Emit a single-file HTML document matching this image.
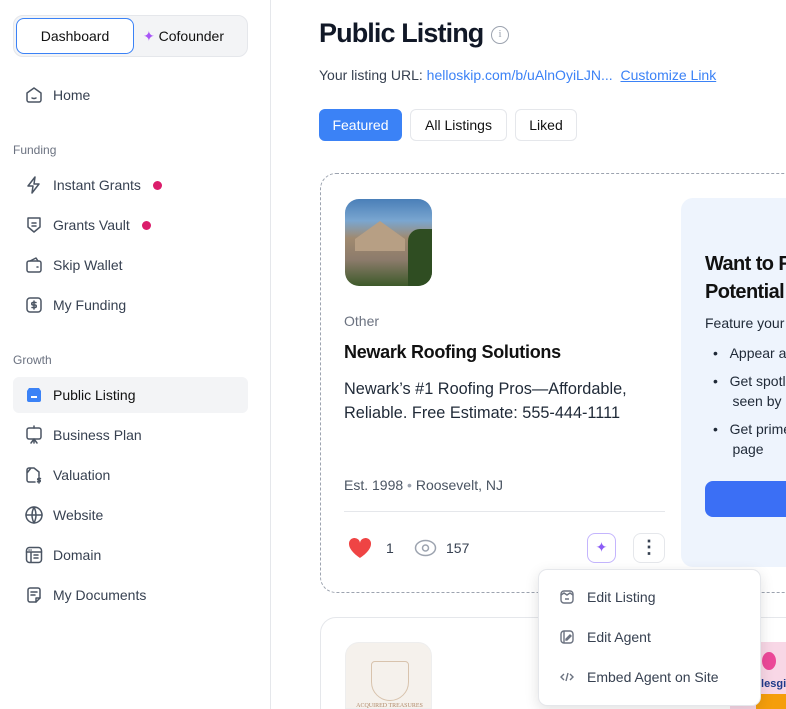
<!DOCTYPE html>
<html><head><meta charset="utf-8"><style>
*{box-sizing:border-box;margin:0;padding:0}
html,body{width:786px;height:709px;overflow:hidden}
body{background:#fff;font-family:"Liberation Sans",sans-serif;position:relative;color:#1f2937}
#w{position:absolute;left:0;top:0;width:786px;height:709px;overflow:hidden}
.side{position:absolute;left:0;top:0;width:271px;height:709px;border-right:1px solid #e5e7eb}
.seg{position:absolute;left:13px;top:15px;width:235px;height:42px;background:#f3f4f6;border:1px solid #e5e7eb;border-radius:10px}
.seg .a{position:absolute;left:2px;top:2px;width:118px;height:36px;background:#fff;border:1px solid #3b82f6;border-radius:8px;text-align:center;line-height:34px;font-size:14px;color:#111}
.seg .b{position:absolute;left:128px;top:0;line-height:40px;font-size:14px;color:#111}
.nav{position:absolute;left:24px;font-size:14px;color:#374151;display:flex;align-items:center;height:20px}
.nav svg{width:20px;height:20px;margin-right:9px;fill:none;stroke:#4b5563;stroke-width:1.5;stroke-linecap:round;stroke-linejoin:round}
.dot{width:9px;height:9px;border-radius:50%;background:#db1d6b;margin-left:12px}
.lbl{position:absolute;left:13px;font-size:12px;color:#6b7280}
.act{position:absolute;left:13px;top:377px;width:235px;height:36px;background:#f3f4f6;border-radius:6px}
h1{position:absolute;left:319px;top:18px;font-size:27px;font-weight:bold;color:#111827;letter-spacing:-0.9px}
.info{position:absolute;left:491px;top:26px;width:18px;height:18px;border:1.5px solid #9ca3af;border-radius:50%;font-size:11px;color:#9ca3af;text-align:center;line-height:15px;font-family:"Liberation Serif",serif}
.url{position:absolute;left:319px;top:67px;font-size:14px;color:#374151}
.url span{color:#3b82f6}.url u{color:#3b82f6;margin-left:4px}
.tab{position:absolute;top:109px;height:32px;border:1px solid #e5e7eb;border-radius:6px;font-size:14px;line-height:30px;text-align:center;color:#111}
.card{position:absolute;left:320px;top:173px;width:520px;height:420px;border:1px dashed #9ca3af;border-radius:16px}
.img{position:absolute;border-radius:14px;overflow:hidden}
.t{position:absolute;white-space:nowrap}
.panel{position:absolute;left:681px;top:198px;width:140px;height:369px;background:#eef4fd;border-radius:12px}
.btn{position:absolute;width:30px;height:30px;border:1px solid #e5e7eb;border-radius:8px;background:#fff}
.menu{position:absolute;left:538px;top:569px;width:223px;height:137px;background:#fff;border:1px solid #e5e7eb;border-radius:9px;box-shadow:0 4px 14px rgba(0,0,0,.12)}
.mi{position:absolute;left:20px;font-size:14px;color:#374151;display:flex;align-items:center}
.mi svg{width:16px;height:16px;margin-right:12px;fill:none;stroke:#6b7280;stroke-width:1.4}
</style></head><body><div id="w">
<div class="side">
<div class="seg"><div class="a">Dashboard</div><div class="b" style="left:129px"><span style="color:#a855f7">✦</span> Cofounder</div></div>
<div class="nav" style="top:85px"><svg viewBox="0 0 20 20"><path d="M3 8l7-5 7 5v7a2 2 0 0 1-2 2H5a2 2 0 0 1-2-2z"/><path d="M8 13q2 1 4 0"/></svg>Home</div>
<div class="lbl" style="top:143px">Funding</div>
<div class="nav" style="top:175px"><svg viewBox="0 0 20 20"><path d="M11 2L4 11h5l-1 7 7-9h-5z"/></svg>Instant Grants<span class="dot"></span></div>
<div class="nav" style="top:215px"><svg viewBox="0 0 20 20"><path d="M4 3h12v9l-6 5-6-5z"/><path d="M8 8h4M8 11h4"/></svg>Grants Vault<span class="dot"></span></div>
<div class="nav" style="top:255px"><svg viewBox="0 0 20 20"><rect x="3" y="6" width="14" height="11" rx="2"/><path d="M6 6l6-3 2 3M13 12h1"/></svg>Skip Wallet</div>
<div class="nav" style="top:295px"><svg viewBox="0 0 20 20"><rect x="3" y="3" width="14" height="14" rx="3"/><path d="M12 7.5h-3a1.2 1.2 0 0 0 0 2.5h2a1.2 1.2 0 0 1 0 2.5H8M10 6v8"/></svg>My Funding</div>
<div class="lbl" style="top:353px">Growth</div>
<div class="act"></div>
<div class="nav" style="top:385px;color:#111"><svg viewBox="0 0 20 20" style="stroke:none"><path d="M3 6l2-3h10l2 3v9a2 2 0 0 1-2 2H5a2 2 0 0 1-2-2z" fill="#3b82f6"/><rect x="7" y="11" width="6" height="2" fill="#fff"/></svg>Public Listing</div>
<div class="nav" style="top:425px"><svg viewBox="0 0 20 20"><rect x="3" y="3" width="14" height="11" rx="2"/><path d="M10 14v4M7 18l3-4 3 4M10 1v2"/></svg>Business Plan</div>
<div class="nav" style="top:465px"><svg viewBox="0 0 20 20"><path d="M11 17H5a2 2 0 0 1-2-2V5a2 2 0 0 1 2-2h5l5 4v4M3 8l4-5"/><path d="M15 12v6M16.5 13.5h-2a.8.8 0 0 0 0 1.6h1a.8.8 0 0 1 0 1.6h-2"/></svg>Valuation</div>
<div class="nav" style="top:505px"><svg viewBox="0 0 20 20"><circle cx="10" cy="10" r="8"/><path d="M2 10h16M10 2q-4 8 0 16q4-8 0-16"/></svg>Website</div>
<div class="nav" style="top:545px"><svg viewBox="0 0 20 20"><rect x="2.5" y="2.5" width="15" height="15" rx="3"/><path d="M2.5 7h15M7 7v10M10 10h4M10 13h4M5 5h.1M7 5h.1"/></svg>Domain</div>
<div class="nav" style="top:585px"><svg viewBox="0 0 20 20"><path d="M12 17H6a2 2 0 0 1-2-2V5a2 2 0 0 1 2-2h8a2 2 0 0 1 2 2v8z"/><path d="M7 7h6M7 10h4M12 17v-4h4"/></svg>My Documents</div>
</div>

<h1>Public Listing</h1><div class="info">i</div>
<div class="url">Your listing URL: <span>helloskip.com/b/uAlnOyiLJN...</span> <u>Customize Link</u></div>
<div class="tab" style="left:319px;width:83px;background:#3b82f6;border-color:#3b82f6;color:#fff">Featured</div>
<div class="tab" style="left:410px;width:97px">All Listings</div>
<div class="tab" style="left:515px;width:62px">Liked</div>

<div class="card"></div>
<div class="img" style="left:345px;top:199px;width:87px;height:87px;background:linear-gradient(180deg,#4a7fb8 0%,#7aa6d0 25%,#a08a70 45%,#8c7b6b 70%,#3d5a2a 100%)">
<div style="position:absolute;left:10px;top:22px;width:50px;height:30px;background:#b79f84;clip-path:polygon(50% 0,100% 60%,100% 100%,0 100%,0 60%)"></div>
<div style="position:absolute;right:0;top:30px;width:24px;height:57px;background:#2f4d22;border-radius:12px 0 0 0"></div></div>
<div class="t" style="left:344px;top:313px;font-size:14px;color:#6b7280">Other</div>
<div class="t" style="left:344px;top:342px;font-size:18px;font-weight:bold;color:#111;letter-spacing:-0.3px">Newark Roofing Solutions</div>
<div class="t" style="left:344px;top:377px;font-size:16.3px;color:#1f2937;line-height:24px">Newark’s #1 Roofing Pros—Affordable,<br>Reliable. Free Estimate: 555-444-1111</div>
<div class="t" style="left:344px;top:477px;font-size:14px;color:#4b5563">Est. 1998 <span style="color:#9ca3af">•</span> Roosevelt, NJ</div>
<div style="position:absolute;left:344px;top:511px;width:321px;height:1px;background:#e5e7eb"></div>
<svg style="position:absolute;left:348px;top:537px" width="24" height="22" viewBox="0 0 24 22"><path d="M12 21S1 14 1 7a5.5 5.5 0 0 1 11-1 5.5 5.5 0 0 1 11 1c0 7-11 14-11 14z" fill="#ef4444"/></svg>
<div class="t" style="left:386px;top:540px;font-size:14px;color:#374151">1</div>
<svg style="position:absolute;left:414px;top:539px" width="23" height="18" viewBox="0 0 23 18"><ellipse cx="11.5" cy="9" rx="10" ry="7.5" fill="none" stroke="#9ca3af" stroke-width="1.5"/><circle cx="11.5" cy="9" r="3" fill="none" stroke="#9ca3af" stroke-width="1.5"/></svg>
<div class="t" style="left:446px;top:540px;font-size:14px;color:#374151">157</div>
<div class="btn" style="left:587px;top:533px;width:29px;border-color:#c4b5fd;text-align:center;line-height:27px;color:#8b5cf6;font-size:14px">✦</div>
<div class="btn" style="left:633px;top:533px;width:32px;text-align:center;line-height:26px;font-size:18px;color:#374151;font-weight:bold">⋮</div>

<div class="panel"></div>
<div class="t" style="left:705px;top:250px;font-size:20px;font-weight:bold;color:#111;line-height:28px;letter-spacing:-0.6px">Want to Reach<br>Potential Customers</div>
<div class="t" style="left:705px;top:315px;font-size:14px;color:#1f2937">Feature your listing</div>
<div class="t" style="left:713px;top:343px;font-size:14px;color:#1f2937;line-height:20px">•&nbsp;&nbsp;&nbsp;Appear at top<br><div style="height:8px"></div>•&nbsp;&nbsp;&nbsp;Get spotlighted<br>&nbsp;&nbsp;&nbsp;&nbsp;&nbsp;seen by many<br><div style="height:8px"></div>•&nbsp;&nbsp;&nbsp;Get prime spot<br>&nbsp;&nbsp;&nbsp;&nbsp;&nbsp;page</div>
<div style="position:absolute;left:705px;top:481px;width:100px;height:36px;background:#3b6ff5;border-radius:8px"></div>

<div style="position:absolute;left:320px;top:617px;width:520px;height:120px;border:1px solid #e5e7eb;border-radius:16px"></div>
<div class="img" style="left:345px;top:642px;width:87px;height:67px;border-radius:14px 14px 0 0;background:#f5f1ec;border:1px solid #eee"><div style="position:absolute;left:25px;top:18px;width:38px;height:40px;border:1px solid #d8c3ad;border-radius:4px 4px 20px 20px"></div><div style="position:absolute;left:0;width:87px;top:60px;font-size:6px;color:#b08a6a;text-align:center;font-family:'Liberation Serif',serif">ACQUIRED TREASURES</div></div>
<div class="img" style="left:730px;top:642px;width:56px;height:67px;background:#f8d7e6;border-radius:14px 0 0 0"><div style="position:absolute;left:32px;top:10px;width:14px;height:18px;background:#ec4899;border-radius:50%"></div><div style="position:absolute;left:28px;top:36px;font-size:11px;font-weight:bold;color:#1e3a8a">ilesgif</div><div style="position:absolute;left:26px;top:52px;width:30px;height:15px;background:#f59e0b"></div></div>

<div class="menu">
<div class="mi" style="top:19px"><svg viewBox="0 0 16 16"><rect x="2" y="2" width="12" height="12" rx="3"/><path d="M2 6l3-2 3 2 3-2 3 2M6 10h4"/></svg>Edit Listing</div>
<div class="mi" style="top:59px"><svg viewBox="0 0 16 16"><rect x="2" y="2" width="12" height="12" rx="3"/><path d="M5 2v12M8 11l4-4-1-1-4 4v1z"/></svg>Edit Agent</div>
<div class="mi" style="top:99px"><svg viewBox="0 0 16 16"><path d="M5 5L2 8l3 3M11 5l3 3-3 3M9 4L7 12"/></svg>Embed Agent on Site</div>
</div>
</div></body></html>
